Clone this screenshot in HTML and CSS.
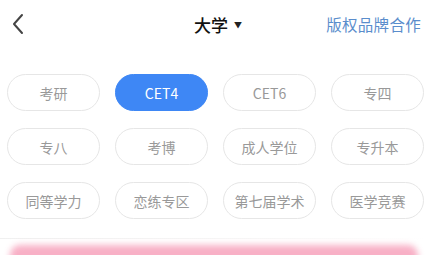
FILE: index.html
```html
<!DOCTYPE html>
<html lang="zh">
<head>
<meta charset="utf-8">
<link rel="stylesheet" href="styles.css">
</head>
<body>
<div class="page">
  <header class="bar">
    <div class="back">
      <svg width="14" height="22" viewBox="0 0 14 22"><path d="M11 2 L3 11 L11 20" fill="none" stroke="#444" stroke-width="2" stroke-linecap="round" stroke-linejoin="round"/></svg>
    </div>
    <div class="title">大学<span class="caret">▼</span></div>
    <div class="link">版权品牌合作</div>
  </header>
  <main class="grid">
    <div class="pill">考研</div>
    <div class="pill active">CET4</div>
    <div class="pill">CET6</div>
    <div class="pill">专四</div>
    <div class="pill">专八</div>
    <div class="pill">考博</div>
    <div class="pill">成人学位</div>
    <div class="pill">专升本</div>
    <div class="pill">同等学力</div>
    <div class="pill">恋练专区</div>
    <div class="pill">第七届学术</div>
    <div class="pill">医学竞赛</div>
  </main>
  <div class="divider"></div>
  <div class="banner"></div>
</div>
</body>
</html>
```
FILE: styles.css
```css
* { box-sizing: border-box; }
html, body { margin: 0; padding: 0; background: #fff; }
body { font-family: "Noto Sans CJK SC", "Noto Sans", sans-serif; overflow: hidden; }
.page { width: 426px; height: 255px; overflow: hidden; }
.bar {
  height: 48px;
  display: grid;
  grid-template-columns: 1fr auto 1fr;
  align-items: center;
  padding: 0 5px 0 11px;
}
.back { display: flex; align-items: center; height: 22px; }
.back svg { display: block; }
.title {
  font-size: 17px;
  font-weight: 500;
  color: #111;
  display: flex;
  align-items: center;
  margin-left: 4px;
}
.caret { font-size: 8px; margin-left: 6px; color: #222; }
.link {
  justify-self: end;
  font-size: 15.5px;
  color: #5a8dcc;
  letter-spacing: 0.3px;
}
.grid {
  display: grid;
  grid-template-columns: repeat(4, 93px);
  column-gap: 15px;
  row-gap: 17px;
  padding: 26px 0 0 7px;
}
.pill {
  height: 37px;
  border: 1px solid #e6e6e6;
  border-radius: 19px;
  display: flex;
  align-items: center;
  justify-content: center;
  font-size: 14px;
  color: #999;
  background: #fff;
}
.pill.active {
  background: #3e87f5;
  border-color: #3e87f5;
  color: #fff;
}
.divider {
  margin-top: 19px;
  height: 1px;
  background: linear-gradient(90deg, #f0f0f0, #f7f7f7 60%, #fff);
}
.banner {
  margin: 6px 8px 0 10px;
  height: 30px;
  border-radius: 10px;
  background: #f8b0c6;
  filter: blur(3px);
}
```
